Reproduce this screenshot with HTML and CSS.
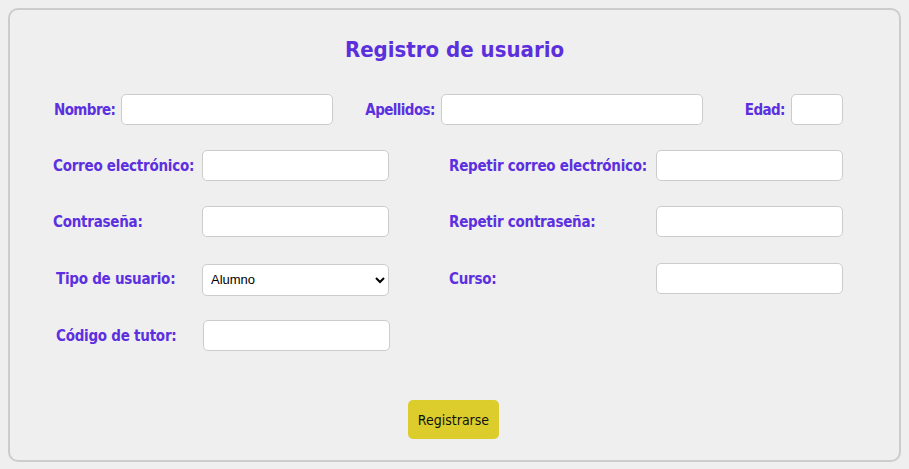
FILE: index.html
```html
<!DOCTYPE html>
<html lang="es">
<head>
<meta charset="utf-8">
<title>Registro de usuario</title>
<link rel="stylesheet" href="styles.css">
</head>
<body>
<form class="card">
  <h1 class="title">Registro de usuario</h1>
  <div class="row-top">
    <label class="lbl">Nombre:</label>
    <input class="field f-nombre" type="text">
    <label class="lbl l-apellidos">Apellidos:</label>
    <input class="field f-apellidos" type="text">
    <label class="lbl l-edad">Edad:</label>
    <input class="field f-edad" type="text">
  </div>
  <div class="grid">
    <label class="lbl">Correo electrónico:</label>
    <input class="field" type="email">
    <label class="lbl">Repetir correo electrónico:</label>
    <input class="field" type="email">

    <label class="lbl">Contraseña:</label>
    <input class="field" type="password">
    <label class="lbl">Repetir contraseña:</label>
    <input class="field" type="password">

    <label class="lbl lbl-in">Tipo de usuario:</label>
    <select class="field sel"><option>Alumno</option></select>
    <label class="lbl">Curso:</label>
    <input class="field" type="text">

    <label class="lbl lbl-in">Código de tutor:</label>
    <input class="field shift" type="text">
  </div>
  <div class="actions">
    <button type="button" class="btn">Registrarse</button>
  </div>
</form>
</body>
</html>
```

FILE: styles.css
```css
html, body {
  margin: 0;
  padding: 0;
  background: #efefef;
}
body {
  padding: 8px;
  font-family: "DejaVu Sans Condensed", "Liberation Sans Narrow", "Liberation Sans", sans-serif;
}
.card {
  width: 893px;
  height: 454px;
  box-sizing: border-box;
  border: 2px solid #cccccc;
  border-radius: 10px;
  background: #efefef;
  padding: 0 0 0 44px;
}
.title {
  margin: 24px 0 0 -44px;
  text-align: center;
  color: #5b2fdc;
  font-size: 22px;
  font-weight: bold;
  line-height: 31px;
  height: 31px;
}
.lbl {
  color: #5c30e0;
  font-weight: bold;
  font-size: 15px;
  letter-spacing: -0.25px;
  white-space: nowrap;
}
.field {
  box-sizing: border-box;
  height: 31px;
  background: #fff;
  border: 1px solid #cccccc;
  border-radius: 5px;
  padding: 0 8px;
  font-family: "Liberation Sans", Arial, sans-serif;
  font-size: 13px;
  margin: 0;
}
.row-top {
  margin-top: 29px;
  display: flex;
  align-items: center;
  height: 31px;
}
.row-top .lbl { margin-right: 6px; letter-spacing: -0.6px; }
.f-nombre { width: 212px; }
.l-apellidos { margin-left: 32px; }
.f-apellidos { width: 262px; }
.l-edad { margin-left: 42px; }
.f-edad { width: 52px; }
.grid {
  margin-top: 25px;
  margin-left: -1px;
  display: grid;
  grid-template-columns: 149px 247px 207px 187px;
  grid-auto-rows: 31px;
  row-gap: 25px;
  align-items: center;
}
.grid .field { width: 187px; }
.lbl-in { padding-left: 3px; }
.sel {
  height: 32px;
  padding: 0 4px;
  color: #000;
  margin-top: 2px;
}
.grid > :nth-child(n+9) { position: relative; top: 1px; }
.grid > :nth-child(n+13) { top: 2px; }
.shift { margin-left: 1px; }
.actions {
  margin: 51px 0 0 -44px;
  display: flex;
  justify-content: center;
}
.btn {
  width: 91px;
  height: 39px;
  background: #dccd2c;
  border: none;
  border-radius: 5px;
  font-family: "DejaVu Sans Condensed", "Liberation Sans Narrow", "Liberation Sans", sans-serif;
  font-size: 14px;
  color: #111;
  margin-left: -2px;
}
```
